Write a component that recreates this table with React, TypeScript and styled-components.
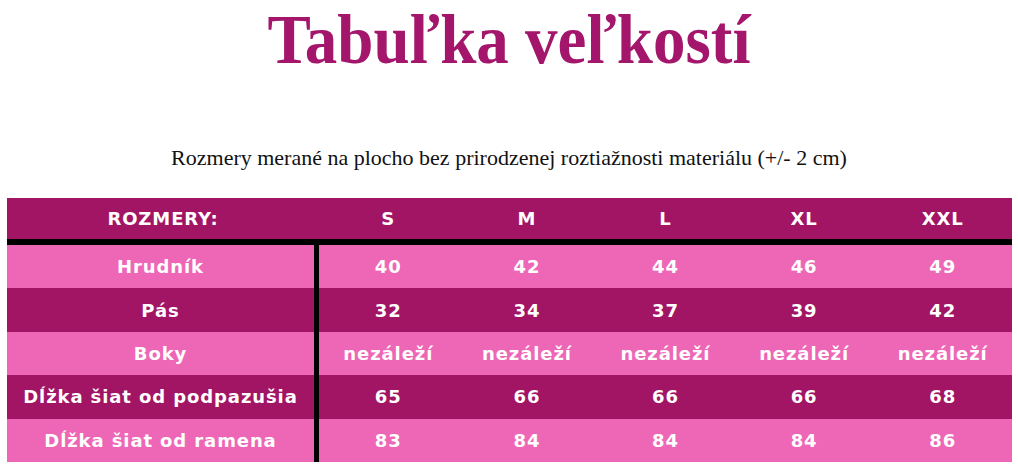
import React from "react";
import styled, { createGlobalStyle } from "styled-components";

const GlobalStyle = createGlobalStyle`
  html, body {
    margin: 0;
    padding: 0;
    background: #ffffff;
  }
`;

const DARK = "#a21464";
const LIGHT = "#ee66b6";

const Page = styled.div`
  width: 1018px;
  height: 476px;
  overflow: hidden;
  display: flex;
  flex-direction: column;
  align-items: center;
`;

const Title = styled.h1`
  margin: 0;
  padding: 2px 0 0;
  height: 74px;
  box-sizing: border-box;
  font-family: "Liberation Serif", "Times New Roman", serif;
  font-weight: bold;
  font-size: 65px;
  line-height: 68px;
  color: #a3166b;
  transform: scaleY(1.08);
  transform-origin: center top;
`;

const Note = styled.p`
  margin: 72px 0 0;
  font-family: "Liberation Serif", "Times New Roman", serif;
  font-size: 22px;
  line-height: 24px;
  color: #111;
`;

const Table = styled.div`
  align-self: flex-start;
  margin: 28px 0 0 7px;
  width: 1005px;
  display: grid;
  grid-template-columns: 312px repeat(5, 1fr);
`;

const HeadRow = styled.div`
  display: contents;
`;

const Cell = styled.div<{ $tone: "dark" | "light"; $head?: boolean; $label?: boolean }>`
  height: ${({ $head }) => ($head ? "41px" : "43.4px")};
  box-sizing: border-box;
  display: flex;
  align-items: center;
  justify-content: center;
  background: ${({ $tone }) => ($tone === "dark" ? DARK : LIGHT)};
  color: #ffffff;
  font-family: "DejaVu Sans", Verdana, sans-serif;
  font-weight: bold;
  font-size: 18px;
  letter-spacing: 0.9px;
  white-space: nowrap;
  border-right: ${({ $label, $head }) => ($label && !$head ? "5px solid #000" : "none")};
`;

const Divider = styled.div`
  grid-column: 1 / -1;
  height: 6px;
  background: #000;
`;

const sizes = ["S", "M", "L", "XL", "XXL"];

const rows: { label: string; values: string[] }[] = [
  { label: "Hrudník", values: ["40", "42", "44", "46", "49"] },
  { label: "Pás", values: ["32", "34", "37", "39", "42"] },
  { label: "Boky", values: ["nezáleží", "nezáleží", "nezáleží", "nezáleží", "nezáleží"] },
  { label: "Dĺžka šiat od podpazušia", values: ["65", "66", "66", "66", "68"] },
  { label: "Dĺžka šiat od ramena", values: ["83", "84", "84", "84", "86"] },
];

export default function App() {
  return (
    <Page>
      <GlobalStyle />
      <Title>Tabuľka veľkostí</Title>
      <Note>Rozmery merané na plocho bez prirodzenej roztiažnosti materiálu (+/- 2 cm)</Note>
      <Table>
        <HeadRow>
          <Cell $tone="dark" $head $label>
            ROZMERY:
          </Cell>
          {sizes.map((s) => (
            <Cell key={s} $tone="dark" $head>
              {s}
            </Cell>
          ))}
        </HeadRow>
        <Divider />
        {rows.map((row, i) => {
          const tone = i % 2 === 0 ? "light" : "dark";
          return (
            <React.Fragment key={row.label}>
              <Cell $tone={tone} $label>
                {row.label}
              </Cell>
              {row.values.map((v, j) => (
                <Cell key={j} $tone={tone}>
                  {v}
                </Cell>
              ))}
            </React.Fragment>
          );
        })}
      </Table>
    </Page>
  );
}
